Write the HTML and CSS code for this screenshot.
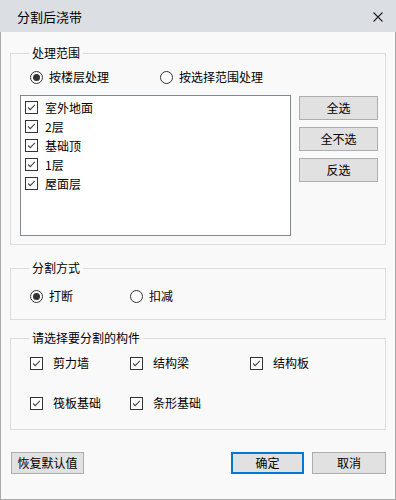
FILE: index.html
```html
<!DOCTYPE html>
<html lang="zh-CN">
<head>
    <meta charset="UTF-8">
    <meta name="viewport" content="width=device-width, initial-scale=1.0">
    <title>分割后浇带</title>
    <link rel="stylesheet" href="styles.css">
</head>
<body>
    <div class="dialog">
        <div class="titlebar">
            <span class="title">分割后浇带</span>
            <svg class="close" width="10" height="10" viewBox="0 0 10 10">
                <path d="M0.5 0.5 L9.5 9.5 M9.5 0.5 L0.5 9.5" stroke="#222" stroke-width="1.1" fill="none"/>
            </svg>
        </div>

        <div class="content">
            <fieldset class="group group-range">
                <legend>处理范围</legend>
                <div class="radio-row">
                    <label class="radio checked"><span class="dot"></span>按楼层处理</label>
                    <label class="radio radio-second"><span class="dot"></span>按选择范围处理</label>
                </div>
                <div class="range-body">
                    <div class="listbox">
                        <div class="list-item"><span class="check"><svg viewBox="0 0 13 13"><path d="M2.5 6.5 L5 9 L10.5 3.5"/></svg></span>室外地面</div>
                        <div class="list-item"><span class="check"><svg viewBox="0 0 13 13"><path d="M2.5 6.5 L5 9 L10.5 3.5"/></svg></span>2层</div>
                        <div class="list-item"><span class="check"><svg viewBox="0 0 13 13"><path d="M2.5 6.5 L5 9 L10.5 3.5"/></svg></span>基础顶</div>
                        <div class="list-item"><span class="check"><svg viewBox="0 0 13 13"><path d="M2.5 6.5 L5 9 L10.5 3.5"/></svg></span>1层</div>
                        <div class="list-item"><span class="check"><svg viewBox="0 0 13 13"><path d="M2.5 6.5 L5 9 L10.5 3.5"/></svg></span>屋面层</div>
                    </div>
                    <div class="side-btns">
                        <button class="btn side-btn">全选</button>
                        <button class="btn side-btn">全不选</button>
                        <button class="btn side-btn">反选</button>
                    </div>
                </div>
            </fieldset>

            <fieldset class="group group-mode">
                <legend>分割方式</legend>
                <div class="radio-row">
                    <label class="radio checked"><span class="dot"></span>打断</label>
                    <label class="radio radio-cut"><span class="dot"></span>扣减</label>
                </div>
            </fieldset>

            <fieldset class="group group-parts">
                <legend>请选择要分割的构件</legend>
                <div class="parts-grid">
                    <label class="part"><span class="check"><svg viewBox="0 0 13 13"><path d="M2.5 6.5 L5 9 L10.5 3.5"/></svg></span>剪力墙</label>
                    <label class="part"><span class="check"><svg viewBox="0 0 13 13"><path d="M2.5 6.5 L5 9 L10.5 3.5"/></svg></span>结构梁</label>
                    <label class="part"><span class="check"><svg viewBox="0 0 13 13"><path d="M2.5 6.5 L5 9 L10.5 3.5"/></svg></span>结构板</label>
                    <label class="part"><span class="check"><svg viewBox="0 0 13 13"><path d="M2.5 6.5 L5 9 L10.5 3.5"/></svg></span>筏板基础</label>
                    <label class="part"><span class="check"><svg viewBox="0 0 13 13"><path d="M2.5 6.5 L5 9 L10.5 3.5"/></svg></span>条形基础</label>
                </div>
            </fieldset>

            <div class="footer">
                <button class="btn footer-btn">恢复默认值</button>
                <div class="footer-right">
                    <button class="btn footer-btn default">确定</button>
                    <button class="btn footer-btn">取消</button>
                </div>
            </div>
        </div>
    </div>
</body>
</html>
```

FILE: styles.css
```css
* {
    box-sizing: border-box;
}
body {
    margin: 0;
    font-family: "Noto Sans CJK SC", "Noto Sans", sans-serif;
    font-size: 12px;
    color: #000;
    background: #f9f9f9;
}
.dialog {
    width: 396px;
    height: 500px;
    border: 1px solid #a9a9a9;
    border-top: none;
    background: #f9f9f9;
}
.titlebar {
    height: 32px;
    background: #dbdee3;
    display: flex;
    align-items: center;
    justify-content: space-between;
    padding: 1px 13px 0 17px;
    margin: 0 -1px;
}
.title {
    font-size: 13px;
    line-height: 16px;
}
.content {
    padding: 0 9px;
}
.group {
    margin: 0;
    padding: 0 7px 0 19px;
    border: 1px solid #dcdcdc;
    min-width: 0;
}
.group legend {
    margin-left: -1px;
    padding: 0 3px;
    line-height: 14px;
}
.group-range {
    margin-top: 14px;
    padding-bottom: 8px;
}
.group-mode {
    margin-top: 16px;
    padding-bottom: 15px;
}
.group-parts {
    margin-top: 11px;
    padding-bottom: 18px;
}
.radio-row {
    display: flex;
    height: 16px;
    margin-top: 9px;
}
.group-mode .radio-row {
    margin-top: 13px;
}
.radio {
    display: flex;
    align-items: center;
    gap: 6px;
    line-height: 16px;
}
.radio-second {
    margin-left: 51px;
}
.radio-cut {
    margin-left: 57px;
}
.dot {
    width: 13px;
    height: 13px;
    border: 1px solid #333;
    border-radius: 50%;
    background: #fff;
    display: flex;
    align-items: center;
    justify-content: center;
}
.radio.checked .dot::after {
    content: "";
    width: 7px;
    height: 7px;
    border-radius: 50%;
    background: #333;
}
.range-body {
    display: flex;
    gap: 8px;
    margin-top: 10px;
    margin-left: -10px;
}
.listbox {
    width: 271px;
    height: 141px;
    border: 1px solid #828790;
    background: #fff;
    padding: 2px 0 0 4px;
}
.list-item {
    display: flex;
    align-items: center;
    gap: 7px;
    height: 19px;
    line-height: 19px;
}
.check {
    width: 13px;
    height: 13px;
    border: 1px solid #333;
    background: #fff;
    display: block;
    flex: none;
}
.check svg {
    display: block;
    width: 11px;
    height: 11px;
    margin: 0;
}
.check path {
    fill: none;
    stroke: #444;
    stroke-width: 1.3;
}
.side-btns {
    display: flex;
    flex-direction: column;
    gap: 7px;
    padding-top: 1px;
}
.btn {
    font-family: inherit;
    font-size: 12px;
    color: #000;
    background: #e1e1e1;
    border: 1px solid #adadad;
    border-radius: 0;
    padding: 0;
    line-height: 16px;
}
.side-btn {
    width: 79px;
    height: 24px;
}
.parts-grid {
    display: grid;
    grid-template-columns: 100px 120px 1fr;
    row-gap: 24px;
    margin-top: 10px;
}
.part {
    display: flex;
    align-items: center;
    gap: 10px;
    height: 16px;
    line-height: 16px;
}
.footer {
    display: flex;
    justify-content: space-between;
    margin-top: 22px;
    padding-left: 1px;
}
.footer-right {
    display: flex;
    gap: 8px;
}
.footer-btn {
    width: 73px;
    height: 22px;
}
.footer-right .footer-btn:last-child {
    width: 74px;
}
.footer-btn.default {
    border: 2px solid #0078d7;
}
```
